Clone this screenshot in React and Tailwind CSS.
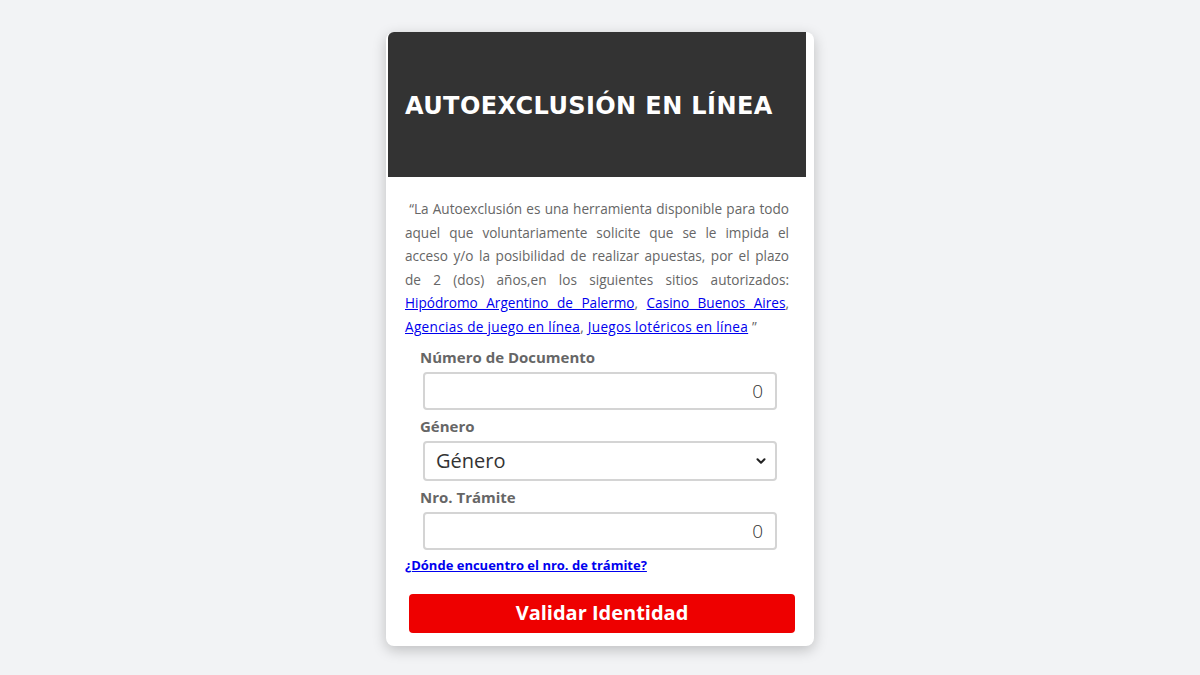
import { ChevronDown } from "lucide-react";

const lines = [
  [{ t: "\u00a0\u201cLa Autoexclusión es una herramienta disponible para todo" }],
  [{ t: "aquel que voluntariamente solicite que se le impida el" }],
  [{ t: "acceso y/o la posibilidad de realizar apuestas, por el plazo" }],
  [{ t: "de 2 (dos) años,en los siguientes sitios autorizados:" }],
  [
    { t: "Hipódromo Argentino de Palermo", link: true },
    { t: ", " },
    { t: "Casino Buenos Aires", link: true },
    { t: "," },
  ],
];

function Field({ label, children }) {
  return (
    <div className="flex flex-col">
      <label className="pl-[34px] text-[15px] font-bold leading-[20px] text-[#666]">
        {label}
      </label>
      <div className="mt-[5px] pl-[37px] pr-[37px]">{children}</div>
    </div>
  );
}

export default function App() {
  return (
    <div
      className="min-h-[675px] bg-[#f2f3f5] pt-[30px]"
      style={{ fontFamily: "'Open Sans', 'Liberation Sans', sans-serif" }}
    >
      <div className="mx-auto w-[428px] rounded-[8px] bg-white pb-[13px] shadow-[0_4px_14px_rgba(0,0,0,0.22)]">
        <div className="ml-[2px] mt-[2px] flex h-[145px] w-[418px] items-center rounded-tl-[6px] bg-[#333333] pl-[17px] pt-[2px]">
          <h1
            className="text-[24px] font-bold tracking-[0.4px] text-white"
            style={{ fontFamily: "'DejaVu Sans', 'Open Sans', sans-serif" }}
          >
            AUTOEXCLUSIÓN EN LÍNEA
          </h1>
        </div>

        <div className="mt-[20px] pl-[19px] pr-[25px] text-[13.6px] leading-[23.6px] text-[#666]">
          {lines.map((parts, i) => (
            <div
              key={i}
              className="whitespace-nowrap text-justify [text-align-last:justify]"
            >
              {parts.map((p, j) =>
                p.link ? (
                  <a key={j} href="#" className="text-[#0000ee] underline">
                    {p.t}
                  </a>
                ) : (
                  <span key={j}>{p.t}</span>
                )
              )}
            </div>
          ))}
          <div className="whitespace-nowrap tracking-[0.3px]">
            <a href="#" className="text-[#0000ee] underline">
              Agencias de juego en línea
            </a>
            ,{" "}
            <a href="#" className="text-[#0000ee] underline">
              Juegos lotéricos en línea
            </a>{" "}
            ”
          </div>
        </div>

        <div className="mt-[8px] flex flex-col gap-[6px]">
          <Field label="Número de Documento">
            <input
              type="text"
              defaultValue="0"
              className="box-border h-[38px] w-full rounded-[4px] border-2 border-[#d4d4d4] bg-white px-[12px] text-right text-[19px] font-light text-[#333] outline-none"
            />
          </Field>
          <Field label="Género">
            <div className="relative">
              <select className="box-border h-[40px] w-full appearance-none rounded-[4px] border-2 border-[#d4d4d4] bg-white pl-[11px] text-[20px] text-[#333] outline-none">
                <option>Género</option>
              </select>
              <ChevronDown
                className="pointer-events-none absolute right-[9px] top-[13px] h-[14px] w-[14px] text-[#222]"
                strokeWidth={3.5}
              />
            </div>
          </Field>
          <Field label="Nro. Trámite">
            <input
              type="text"
              defaultValue="0"
              className="box-border h-[38px] w-full rounded-[4px] border-2 border-[#d4d4d4] bg-white px-[12px] text-right text-[19px] font-light text-[#333] outline-none"
            />
          </Field>
        </div>

        <div className="mt-[5px] pl-[19px] leading-[18px]">
          <a href="#" className="text-[13px] font-bold text-[#0000ee] underline">
            ¿Dónde encuentro el nro. de trámite?
          </a>
        </div>

        <div className="mt-[20px] pl-[23px] pr-[19px]">
          <button className="h-[39px] w-full rounded-[4px] bg-[#ee0000] text-[20px] font-bold text-white">
            Validar Identidad
          </button>
        </div>
      </div>
    </div>
  );
}
